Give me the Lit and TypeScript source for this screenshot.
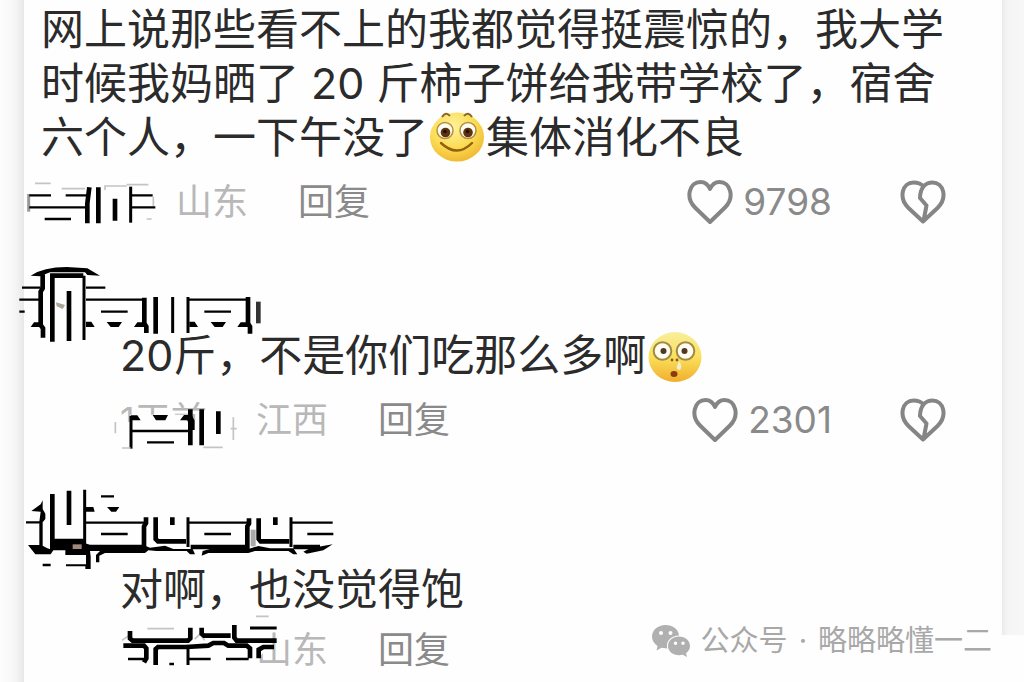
import { LitElement, html, css } from "lit";
import { customElement } from "lit/decorators.js";

const heart = html`<svg class="icon" viewBox="0 0 46 46" aria-hidden="true">
  <path d="M23 43L8 28.500C-2 18.500 2.500 3 13.500 3C18.500 3 21 5.500 23 10C25 5.500 27.500 3 32.500 3C43.500 3 48 18.500 38 28.500Z" />
</svg>`;

const brokenHeart = html`<svg class="icon" viewBox="0 0 46 46" aria-hidden="true">
  <path d="M23 42.500L8.500 29C-2 18.500 2.500 3.500 13.500 3.500C18 3.500 21 4.500 23.500 7.500C26 4.500 28.500 3.500 32.500 3.500C43.500 3.500 48 18.500 37.500 29ZM23.500 7.500Q20 12 20 19L26.500 26.500L23.500 42" />
</svg>`;

const smile = html`<svg class="emoji" viewBox="0 0 58 54" role="img" aria-label="微笑">
  <defs><radialGradient id="s" cx=".42" cy=".3" r=".75">
    <stop offset="0" stop-color="#fff3a0" /><stop offset=".55" stop-color="#fbdc55" /><stop offset="1" stop-color="#eeb52c" />
  </radialGradient></defs>
  <ellipse cx="29" cy="27" rx="27" ry="24.500" fill="url(#s)" />
  <path d="M14 7Q18 1 22 6M36 6Q40 1 44 7" fill="none" stroke="#8a6526" stroke-width="2" />
  <circle cx="17" cy="20.500" r="8" fill="#fffdf0" stroke="#b58f3a" stroke-width="1.500" />
  <circle cx="40" cy="20.500" r="8" fill="#fffdf0" stroke="#b58f3a" stroke-width="1.500" />
  <circle cx="17.500" cy="22.500" r="4.800" fill="#5d3210" /><circle cx="40" cy="22.500" r="4.800" fill="#5d3210" />
  <circle cx="17" cy="21.500" r="1.800" fill="#201008" /><circle cx="39.500" cy="21.500" r="1.800" fill="#201008" />
  <path d="M13 33Q29 48 44 33" fill="none" stroke="#93600f" stroke-width="2.400" stroke-linecap="round" />
</svg>`;

const stunned = html`<svg class="emoji" viewBox="0 0 58 54" role="img" aria-label="发呆">
  <defs><linearGradient id="t" x1="0" y1="0" x2="0" y2="1">
    <stop offset="0" stop-color="#f8ef9c" /><stop offset=".5" stop-color="#fae05c" /><stop offset="1" stop-color="#f0ae2c" />
  </linearGradient></defs>
  <ellipse cx="29" cy="29" rx="26.500" ry="25" fill="url(#t)" />
  <circle cx="16.500" cy="23" r="8.800" fill="#fffdf0" stroke="#a08a45" stroke-width="2" />
  <circle cx="39.500" cy="23" r="8.800" fill="#fffdf0" stroke="#a08a45" stroke-width="2" />
  <circle cx="17.500" cy="23" r="3" fill="#4e3823" /><circle cx="38.500" cy="23" r="3" fill="#4e3823" />
  <circle cx="26" cy="32" r="1.400" fill="#8a5c1e" /><circle cx="31" cy="32" r="1.400" fill="#8a5c1e" />
  <path d="M33 33Q37 38 34 42Q30 42 31 38Z" fill="#eef0cf" />
  <ellipse cx="28" cy="46" rx="3.500" ry="3" fill="#8b3a12" />
</svg>`;

const inkA = html`<svg class="ink ink-a" viewBox="42 9 420 168" aria-hidden="true">
  <path class="pale" d="M75 40H122M155 56H225M285 60V48H350M350 44H415M430 80V108M410 147H425" />
  <path class="thin" d="M58 76H123M167 76H235M58 112H230M104 147H183M366 76H428M366 112H436" />
  <path class="mid" d="M56 72V125" opacity=".4" />
  <path class="thick" d="M238 52L232 100V160M265 52V160M315 86V152" />
  <path class="mid" d="M362 50V158" />
</svg>`;

const inkB = html`<svg class="ink ink-b" viewBox="0 0 810 300" aria-hidden="true">
  <path class="solid" d="M62 62Q100 36 170 36L232 40L270 62L232 60L225 52H120L90 64Z" />
  <path class="lite" d="M108 62H128L112 78ZM125 54H215V57H125Z" />
  <path class="thin" d="M36 98H92M28 134H88M28 170H44M228 98H286M228 134H405M273 170H353M536 134H715M583 170H663" />
  <path class="thick" d="M98 58V100L92 110V210L99 220V248M127 260V62H220M177 108V258M403 128V205L409 215V234M437 126V236M714 126V205L720 215V236" />
  <path class="mid" d="M222 62V255M488 126V234M534 126V234" />
  <path class="thick" d="M745 140V205" opacity=".8" />
  <path class="solid" d="M62 216L72 202H92V216ZM228 200H244L254 216H228ZM290 201H336L326 216H302ZM372 216L382 202H404V216ZM538 200H554L564 216H538ZM602 201H648L638 216H614ZM682 216L692 202H714V216Z" />
  <path d="M138 142L165 150L158 162L140 154Z" fill="#aaa697" />
</svg>`;

const inkC = html`<svg class="ink ink-c" viewBox="0 0 390 210" aria-hidden="true">
  <path class="lite" d="M90 74H260V92H320V178H90ZM40 96H92V180H40Z" />
  <path class="solid" d="M92 76H112L122 91H92ZM158 75H204L196 91H168ZM240 91L252 75H275L284 92V120H272L262 91Z" />
  <path class="thin" d="M92 123H272M141 157H222" />
  <path class="mid" d="M93 78V176" /><path class="thick" d="M271 58V166M305 58V166M355 64V132" />
  <path class="pale" d="M46 96V130M66 174H92M310 172H368M400 82V150M392 116H410" />
</svg>`;

const inkD = html`<svg class="ink ink-d" viewBox="0 0 1020 300" aria-hidden="true">
  <path class="solid" d="M64 96L92 76L98 64V90L106 104V120L98 130V200L112 208L130 214L122 226H76L54 198H88V128L92 98ZM228 84L250 84L254 98H228ZM291 84H328L318 98H304Z" />
  <path class="thin" d="M48 130H90M273 52H312M228 131H405M273 165H353M536 131H715M583 165H663M845 131H968M892 165H970M98 258H122" />
  <path class="thick" d="M127 45V186H222M177 35V138M408 115V132L402 142V204H230M437 115V180L444 187H528M487 115V138M717 118V134L712 142V204H542M746 118V180L752 187H838M796 115V138M850 204H930" />
  <path class="mid" d="M224 32V200M534 115V204M843 115V204" />
  <path class="solid" d="M120 192H224L240 198H400L420 206L465 200L490 210H548L555 226H540L530 216H440L415 214L405 222H285L268 230V250H258V228L270 216H240L242 232V270H226V262H168V256H228V228H166V214H120L100 226V210H120Z" />
  <path class="solid" d="M578 216L600 210H715L745 201L780 208H850L862 226H850L835 216H735L715 222H595L575 230ZM880 218L900 208L968 196L940 214L890 224Z" />
  <path d="M188 196H215V210H188Z" fill="#a18980" /><path d="M722 152H737V202H722Z" fill="#aaa" />
</svg>`;

const inkE = html`<svg class="ink ink-e" viewBox="0 0 540 180" aria-hidden="true">
  <path class="lite" d="M64 60H500V100L476 130V160H64Z" />
  <path class="pale" d="M142 41H222M66 76L95 56M284 72L300 58L314 76M468 4H506" />
  <path class="thick" d="M90 48V70L98 77H264L271 70V38M305 38V56L312 62H392M403 30V68L410 77H530M70 92H132L139 100V130L132 142M167 150V102L174 96H258L325 92L340 84H372L385 92H440L450 100V130M476 130V104L490 96H522" />
  <path class="mid" d="M264 98V150M450 39H530" />
  <path class="thin" d="M84 132H132M264 132H332M378 132H446M208 147H222" />
</svg>`;

const actions = (n: string) => html`<div class="actions">
  <button class="like" aria-label="赞 ${n}">${heart}<span class="count">${n}</span></button>
  <button aria-label="踩">${brokenHeart}</button>
</div>`;

@customElement("app-root")
export class AppRoot extends LitElement {
  static styles = css`
    :host {
      display: block;
      font-family: Inter, "Noto Sans CJK SC", sans-serif;
      color: #2b2b2b;
    }
    .page {
      position: relative;
      box-sizing: border-box;
      height: 100vh;
      overflow: hidden;
      padding: 0 22px 0 24px;
      background: linear-gradient(90deg, #fdfdfd 0, #f7f7f7 14px, #e8e8e8 24px, #fefefe 24px, #fefefe calc(100% - 22px), #eaeaea calc(100% - 22px), #f5f5f5 calc(100% - 17px), #f7f7f7 100%);
    }
    .corner {
      position: absolute;
      right: 0;
      bottom: 0;
      width: 22px;
      height: 47px;
      background: #fefefe;
    }
    p {
      margin: 0;
      font-size: 43px;
      line-height: 54px;
    }
    .main {
      padding: 2px 0 0 17px;
    }
    .reply {
      padding-left: 96px;
    }
    .head {
      position: relative;
      height: 96px;
      margin-left: -96px;
    }
    .head.tall {
      height: 112px;
    }
    .meta {
      display: flex;
      align-items: center;
      height: 60px;
      margin-top: 8px;
      padding-right: 56px;
      font-size: 36px;
      line-height: 54px;
      color: #b8b8b8;
    }
    .meta.close {
      margin-top: 4px;
    }
    .when {
      position: relative;
      width: 136px;
      height: 54px;
    }
    .when.first {
      width: 152px;
    }
    button {
      display: flex;
      align-items: center;
      border: 0;
      padding: 0;
      background: none;
      font: inherit;
      color: #8a8a8a;
    }
    .answer {
      margin-left: 50px;
    }
    .actions {
      display: flex;
      gap: 68px;
      margin-left: auto;
    }
    .like {
      gap: 10px;
    }
    .count {
      font-size: 37px;
    }
    .icon {
      display: block;
      width: 46px;
      height: 46px;
      fill: none;
      stroke: #858585;
      stroke-width: 4;
      stroke-linejoin: round;
    }
    .emoji {
      width: 58px;
      height: 54px;
      vertical-align: top;
    }
    .ink {
      position: absolute;
      fill: none;
      stroke: #000;
      filter: blur(0.4px);
    }
    .thin { stroke-width: 7; }
    .mid { stroke-width: 9; }
    .thick { stroke-width: 14; }
    .pale { stroke: #c4c4c4; stroke-width: 5; }
    .solid { fill: #000; stroke: none; }
    .lite { fill: #fefefe; stroke: none; }
    .ink path[fill] { stroke: none; }
    .ink-a { left: 0; top: -2px; width: 140px; height: 56px; }
    .ink-b { left: -14px; top: 23px; width: 270px; height: 100px; }
    .ink-c { left: -20px; top: -3px; width: 130px; height: 70px; overflow: visible; }
    .ink-d { left: -14px; top: 29px; width: 340px; height: 100px; }
    .ink-e { left: -20px; top: -8px; width: 180px; height: 60px; }
    .mark {
      position: absolute;
      right: 32px;
      bottom: 21px;
      display: flex;
      align-items: center;
      gap: 11px;
      font-size: 29px;
      line-height: 40px;
      color: #a8a8a8;
    }
    .chat {
      width: 38px;
      height: 32px;
      fill: #b0b0b0;
    }
  `;

  render() {
    return html`<main class="page">
      <div class="corner"></div>
      <article>
        <p class="main">网上说那些看不上的我都觉得挺震惊的，我大学<br />时候我妈晒了 20 斤柿子饼给我带学校了，宿舍<br />六个人，一下午没了${smile}集体消化不良</p>
        <div class="meta">
          <span class="when first">${inkA}</span><span>山东</span>
          <button class="answer">回复</button>
          ${actions("9798")}
        </div>
      </article>
      <article class="reply">
        <div class="head">${inkB}</div>
        <p>20斤，不是你们吃那么多啊${stunned}</p>
        <div class="meta">
          <span class="when">1天前${inkC}</span><span>江西</span>
          <button class="answer">回复</button>
          ${actions("2301")}
        </div>
      </article>
      <article class="reply">
        <div class="head tall">${inkD}</div>
        <p>对啊，也没觉得饱</p>
        <div class="meta close">
          <span class="when">${inkE}</span><span>山东</span>
          <button class="answer">回复</button>
        </div>
      </article>
      <footer class="mark">
        <svg class="chat" viewBox="0 0 38 32" aria-hidden="true">
          <path fill-rule="evenodd" d="M13.500 0C21 0 26.500 4.500 27 10.500C19.500 10.500 14.500 15.500 15 21.500C15 22.500 15.200 23 15.500 23.500L9.500 22.800L4.500 25.500L5.500 21C2 18.500 0 15.500 0 11.500C0 5 6 0 13.500 0ZM9 6A2 2 0 1 0 9 10A2 2 0 1 0 9 6ZM18.500 6A2 2 0 1 0 18.500 10A2 2 0 1 0 18.500 6Z" />
          <path fill-rule="evenodd" d="M27 11.500C33.500 11.500 38 15.800 38 21C38 24 36.500 26.500 34 28.200L35 32L30.800 29.800C23 31.500 16 27.500 16 21C16 15.800 20.500 11.500 27 11.500ZM23.500 16.500A1.700 1.700 0 1 0 23.500 20A1.700 1.700 0 1 0 23.500 16.500ZM31 16.500A1.700 1.700 0 1 0 31 20A1.700 1.700 0 1 0 31 16.500Z" />
        </svg>
        <span>公众号</span><span>·</span><span>略略略懂一二</span>
      </footer>
    </main>`;
  }
}
